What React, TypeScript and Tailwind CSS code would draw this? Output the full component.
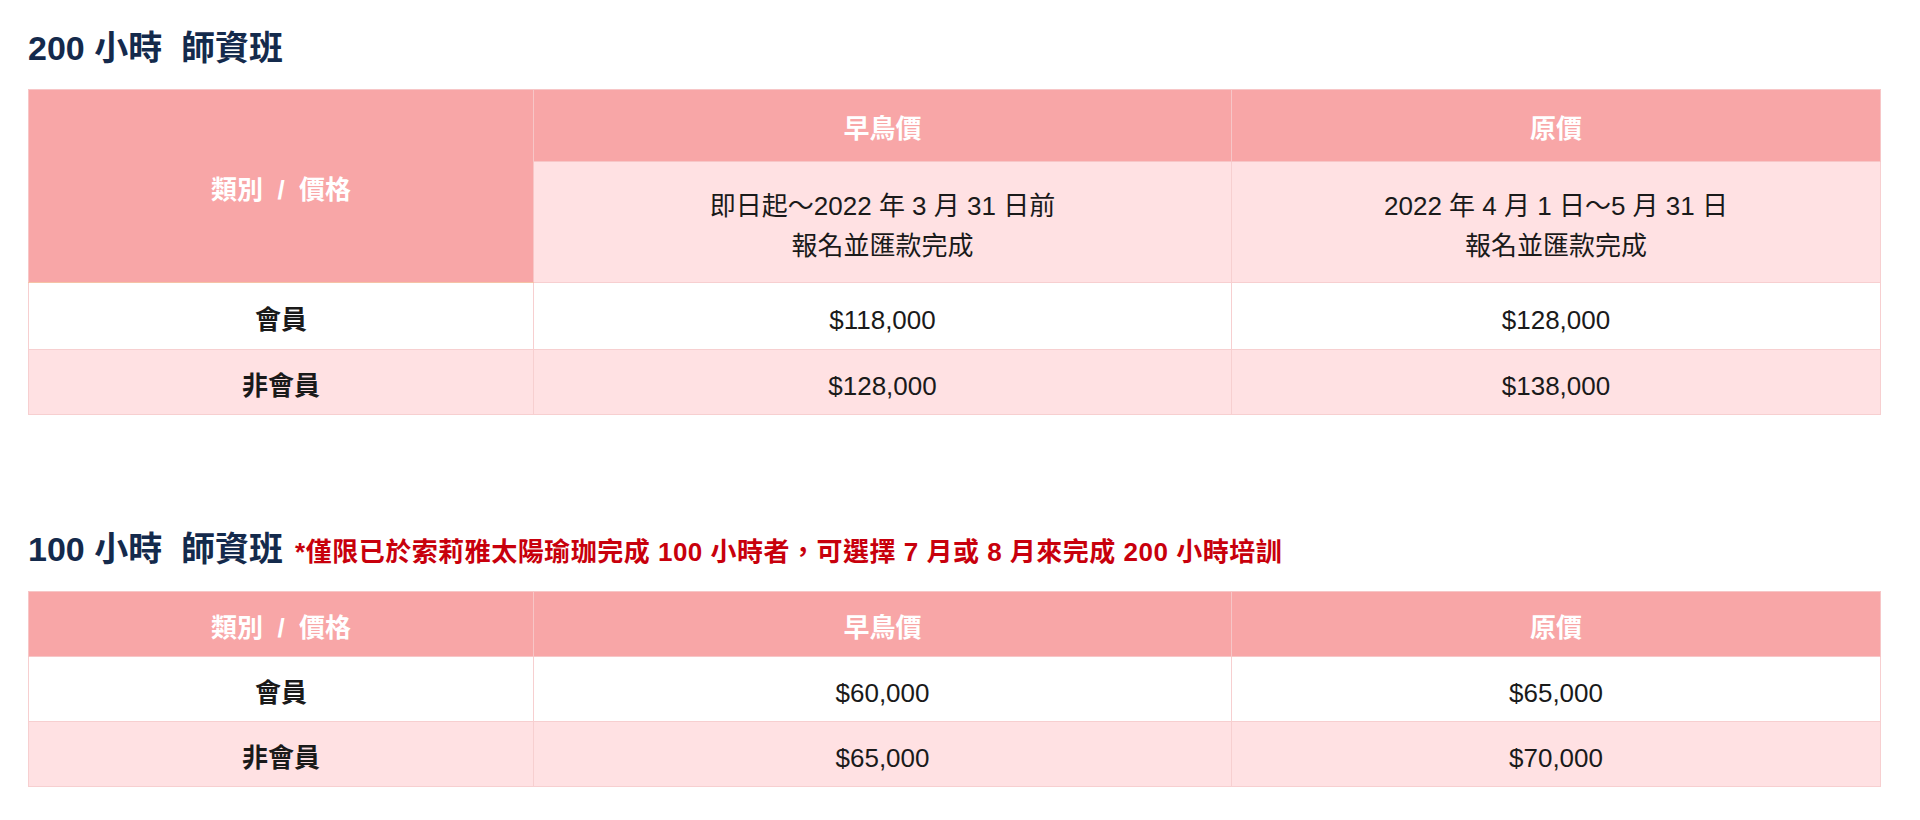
import React from "react";

type PriceRow = {
  label: string;
  early: string;
  regular: string;
  shaded?: boolean;
};

const fontStack = "font-['Liberation_Sans','Noto_Sans_CJK_TC',sans-serif]";

const rows200: PriceRow[] = [
  { label: "會員", early: "$118,000", regular: "$128,000" },
  { label: "非會員", early: "$128,000", regular: "$138,000", shaded: true },
];

const rows100: PriceRow[] = [
  { label: "會員", early: "$60,000", regular: "$65,000" },
  { label: "非會員", early: "$65,000", regular: "$70,000", shaded: true },
];

const headCell =
  "border border-[#f7c6c7] bg-[#f8a6a7] pt-[7px] text-center align-middle font-bold text-white";
const bodyCell =
  "border border-[#f7cfd0] pt-[7px] text-center align-middle text-[#1a1a1a]";

function Cols() {
  return (
    <colgroup>
      <col className="w-[505px]" />
      <col className="w-[698px]" />
      <col className="w-[649px]" />
    </colgroup>
  );
}

function BodyRows({ rows, heights }: { rows: PriceRow[]; heights: string[] }) {
  return (
    <>
      {rows.map((row, i) => (
        <tr key={row.label} className={row.shaded ? "bg-[#ffe1e3]" : "bg-white"}>
          <td className={`${bodyCell} ${heights[i]} font-bold`}>{row.label}</td>
          <td className={`${bodyCell} ${heights[i]}`}>{row.early}</td>
          <td className={`${bodyCell} ${heights[i]}`}>{row.regular}</td>
        </tr>
      ))}
    </>
  );
}

export default function App() {
  return (
    <div className={`min-h-screen bg-white pl-[28px] pt-[28px] ${fontStack} text-[26px] leading-[40px]`}>
      <h2 className="h-[40px] text-[34px] leading-[40px] font-bold text-[#142a4c] whitespace-pre">
        {"200 小時  師資班"}
      </h2>

      <table className="mt-[21px] w-[1852px] table-fixed border-collapse">
        <Cols />
        <tbody>
          <tr>
            <td
              rowSpan={2}
              className={`${headCell} border-b-[#f5c3a6] whitespace-pre`}
            >
              {"類別  /  價格"}
            </td>
            <td className={`${headCell} h-[72px]`}>早鳥價</td>
            <td className={`${headCell} h-[72px]`}>原價</td>
          </tr>
          <tr className="bg-[#ffe1e3]">
            <td className={`${bodyCell} h-[121px]`}>
              即日起～2022 年 3 月 31 日前
              <br />
              報名並匯款完成
            </td>
            <td className={`${bodyCell} h-[121px]`}>
              2022 年 4 月 1 日～5 月 31 日
              <br />
              報名並匯款完成
            </td>
          </tr>
          <BodyRows rows={rows200} heights={["h-[67px]", "h-[65px]"]} />
        </tbody>
      </table>

      <div className="mt-[114px] flex h-[40px] items-baseline">
        <h2 className="text-[34px] leading-[40px] font-bold text-[#142a4c] whitespace-pre">
          {"100 小時  師資班"}
        </h2>
        <span className="ml-[12px] text-[26px] tracking-[0.5px] font-bold text-[#c8000c]">
          *僅限已於索莉雅太陽瑜珈完成 100 小時者，可選擇 7 月或 8 月來完成 200 小時培訓
        </span>
      </div>

      <table className="mt-[22px] w-[1852px] table-fixed border-collapse">
        <Cols />
        <tbody>
          <tr>
            <td className={`${headCell} h-[65px] whitespace-pre`}>{"類別  /  價格"}</td>
            <td className={`${headCell} h-[65px]`}>早鳥價</td>
            <td className={`${headCell} h-[65px]`}>原價</td>
          </tr>
          <BodyRows rows={rows100} heights={["h-[65px]", "h-[65px]"]} />
        </tbody>
      </table>
    </div>
  );
}
